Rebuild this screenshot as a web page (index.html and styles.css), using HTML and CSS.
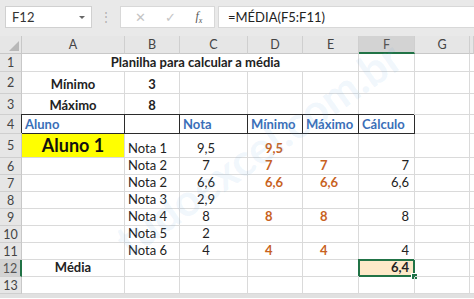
FILE: index.html
```html
<!DOCTYPE html>
<html lang="pt">
<head>
  <meta charset="UTF-8">
  <title>Planilha para calcular a média</title>
  <link rel="stylesheet" href="styles.css">
</head>
<body>

  <div class="toolbar">
    <div class="namebox">F12 <span class="arrow"></span></div>
    <div class="dots">⋮</div>
    <div class="buttons">
      <span class="btn">✕</span>
      <span class="btn">✓</span>
      <span class="btn fx">f<sub>x</sub></span>
    </div>
    <div class="formula">=MÉDIA(F5:F11)</div>
  </div>

  <div class="sheet">
    <!-- cabeçalho das colunas -->
    <div class="corner"></div>
    <div class="colhead">A</div>
    <div class="colhead">B</div>
    <div class="colhead">C</div>
    <div class="colhead">D</div>
    <div class="colhead">E</div>
    <div class="colhead active">F</div>
    <div class="colhead">G</div>
    <div class="colhead"></div>

    <!-- linha 1 -->
    <div class="rowhead">1</div>
    <div class="cell title">Planilha para calcular a média</div>
    <div class="cell"></div>
    <div class="cell"></div>
    <div class="cell"></div>

    <!-- linha 2 -->
    <div class="rowhead">2</div>
    <div class="cell bold center">Mínimo</div>
    <div class="cell bold center">3</div>
    <div class="cell"></div>
    <div class="cell"></div>
    <div class="cell"></div>
    <div class="cell"></div>
    <div class="cell"></div>
    <div class="cell"></div>

    <!-- linha 3 -->
    <div class="rowhead">3</div>
    <div class="cell bold center">Máximo</div>
    <div class="cell bold center">8</div>
    <div class="cell"></div>
    <div class="cell"></div>
    <div class="cell"></div>
    <div class="cell"></div>
    <div class="cell"></div>
    <div class="cell"></div>

    <!-- linha 4 -->
    <div class="rowhead">4</div>
    <div class="cell hdr">Aluno</div>
    <div class="cell hdr"></div>
    <div class="cell hdr">Nota</div>
    <div class="cell hdr">Mínimo</div>
    <div class="cell hdr">Máximo</div>
    <div class="cell hdr">Cálculo</div>
    <div class="cell"></div>
    <div class="cell"></div>

    <!-- linha 5 -->
    <div class="rowhead">5</div>
    <div class="cell student">Aluno 1</div>
    <div class="cell">Nota 1</div>
    <div class="cell note">9,5</div>
    <div class="cell orange">9,5</div>
    <div class="cell orange"></div>
    <div class="cell num"></div>
    <div class="cell"></div>
    <div class="cell"></div>

    <!-- linha 6 -->
    <div class="rowhead">6</div>
    <div class="cell"></div>
    <div class="cell">Nota 2</div>
    <div class="cell note">7</div>
    <div class="cell orange">7</div>
    <div class="cell orange">7</div>
    <div class="cell num">7</div>
    <div class="cell"></div>
    <div class="cell"></div>

    <!-- linha 7 -->
    <div class="rowhead">7</div>
    <div class="cell"></div>
    <div class="cell">Nota 2</div>
    <div class="cell note">6,6</div>
    <div class="cell orange">6,6</div>
    <div class="cell orange">6,6</div>
    <div class="cell num">6,6</div>
    <div class="cell"></div>
    <div class="cell"></div>

    <!-- linha 8 -->
    <div class="rowhead">8</div>
    <div class="cell"></div>
    <div class="cell">Nota 3</div>
    <div class="cell note">2,9</div>
    <div class="cell orange"></div>
    <div class="cell orange"></div>
    <div class="cell num"></div>
    <div class="cell"></div>
    <div class="cell"></div>

    <!-- linha 9 -->
    <div class="rowhead">9</div>
    <div class="cell"></div>
    <div class="cell">Nota 4</div>
    <div class="cell note">8</div>
    <div class="cell orange">8</div>
    <div class="cell orange">8</div>
    <div class="cell num">8</div>
    <div class="cell"></div>
    <div class="cell"></div>

    <!-- linha 10 -->
    <div class="rowhead">10</div>
    <div class="cell"></div>
    <div class="cell">Nota 5</div>
    <div class="cell note">2</div>
    <div class="cell orange"></div>
    <div class="cell orange"></div>
    <div class="cell num"></div>
    <div class="cell"></div>
    <div class="cell"></div>

    <!-- linha 11 -->
    <div class="rowhead">11</div>
    <div class="cell"></div>
    <div class="cell">Nota 6</div>
    <div class="cell note">4</div>
    <div class="cell orange">4</div>
    <div class="cell orange">4</div>
    <div class="cell num">4</div>
    <div class="cell"></div>
    <div class="cell"></div>

    <!-- linha 12 -->
    <div class="rowhead active">12</div>
    <div class="cell bold center">Média</div>
    <div class="cell"></div>
    <div class="cell"></div>
    <div class="cell"></div>
    <div class="cell"></div>
    <div class="cell num result">6,4<span class="handle"></span></div>
    <div class="cell"></div>
    <div class="cell"></div>

    <!-- linha 13 -->
    <div class="rowhead">13</div>
    <div class="cell"></div>
    <div class="cell"></div>
    <div class="cell"></div>
    <div class="cell"></div>
    <div class="cell"></div>
    <div class="cell"></div>
    <div class="cell"></div>
    <div class="cell"></div>
  </div>

  <div class="scrollbar"></div>

  <div class="watermark">tudoexcel.com.br</div>

</body>
</html>
```

FILE: styles.css
```css
body {
  margin: 0;
  width: 474px;
  height: 299px;
  overflow: hidden;
  position: relative;
  background: #fff;
  font-family: Lato, "Liberation Sans", sans-serif;
  font-size: 13px;
  color: #222;
}

/* barra de fórmulas */
.toolbar {
  height: 36px;
  background: #e9e9e9;
  display: flex;
  align-items: flex-start;
  padding: 6px 0 0 5px;
  box-sizing: border-box;
}

.namebox {
  width: 87px;
  height: 22px;
  background: #fff;
  border: 1px solid #d0d0d0;
  box-sizing: border-box;
  display: flex;
  align-items: center;
  justify-content: space-between;
  padding: 0 6px 0 6px;
  color: #333;
}

.arrow {
  width: 0;
  height: 0;
  border-left: 3px solid transparent;
  border-right: 3px solid transparent;
  border-top: 3px solid #666;
}

.dots {
  width: 28px;
  text-align: center;
  color: #b0b0b0;
  line-height: 22px;
  font-size: 12px;
}

.buttons {
  width: 95px;
  height: 22px;
  background: #fff;
  border: 1px solid #d8d8d8;
  box-sizing: border-box;
  display: flex;
  align-items: center;
  justify-content: space-around;
  padding: 0 2px 0 4px;
}

.btn {
  color: #c4c4c4;
  font-size: 13px;
}

.fx {
  color: #555;
  font-family: "Liberation Serif", serif;
  font-style: italic;
  font-size: 12px;
}

.fx sub {
  font-size: 8px;
}

.formula {
  flex: 1;
  height: 22px;
  margin-left: 3px;
  background: #fff;
  border: 1px solid #d8d8d8;
  border-right: none;
  box-sizing: border-box;
  padding-left: 9px;
  line-height: 20px;
  color: #222;
}

/* planilha */
.sheet {
  display: grid;
  grid-template-columns: 22px 103px 55px 68px 55px 56px 56px 55px 4px;
  grid-template-rows: 18px 18px 22px 21px 19px 24px repeat(8, 17px);
}

.corner {
  background: #e6e6e6;
  border-right: 1px solid #c8c8c8;
  border-bottom: 1px solid #c8c8c8;
  position: relative;
}

.corner::after {
  content: "";
  position: absolute;
  right: 2px;
  bottom: 2px;
  border-left: 10px solid transparent;
  border-bottom: 10px solid #b8b8b8;
}

.colhead {
  background: #e6e6e6;
  border-right: 1px solid #cfcfcf;
  border-bottom: 1px solid #c8c8c8;
  display: flex;
  align-items: center;
  justify-content: center;
  color: #444;
  font-size: 12.5px;
}

.colhead.active {
  background: #d3d3d3;
  border-bottom: 2px solid #217346;
  color: #555;
}

.rowhead {
  background: #e6e6e6;
  border-right: 1px solid #c8c8c8;
  border-bottom: 1px solid #cfcfcf;
  display: flex;
  align-items: center;
  justify-content: center;
  color: #444;
  font-size: 12.5px;
}

.rowhead.active {
  background: #d3d3d3;
  border-right: 2px solid #217346;
  color: #555;
}

.cell {
  border-right: 1px solid #dadada;
  border-bottom: 1px solid #dadada;
  padding: 0 3px;
  display: flex;
  align-items: flex-end;
  padding-bottom: 1px;
  white-space: nowrap;
  position: relative;
}

.title {
  grid-column: span 5;
  justify-content: center;
  font-weight: bold;
  padding-left: 14px;
}

.bold {
  font-weight: bold;
}

.center {
  justify-content: center;
}

.hdr {
  border-right-color: #2b2b2b;
  border-bottom-color: #2b2b2b;
  box-shadow: -1px -1px 0 #2b2b2b;
  color: #3a6fb8;
  font-weight: bold;
}

.student {
  background: #ffff00;
  justify-content: center;
  align-items: center;
  font-weight: bold;
  font-size: 18px;
  color: #111;
  padding-bottom: 2px;
}

.note {
  justify-content: center;
  padding-right: 18px;
}

.orange {
  color: #c8621e;
  font-weight: bold;
  padding-left: 17px;
}

.num {
  justify-content: flex-end;
  padding-right: 5px;
}

.result {
  background: #fde9c8;
  font-weight: bold;
  box-shadow: inset 0 0 0 1px #217346, -1px -1px 0 #217346;
  border-right-color: #217346;
  border-bottom-color: #217346;
}

.handle {
  position: absolute;
  right: -4px;
  bottom: -4px;
  width: 5px;
  height: 5px;
  background: #217346;
  border: 1px solid #fff;
}

.scrollbar {
  height: 4px;
  background: #e1e1e1;
}

/* marca d'água */
.watermark {
  position: absolute;
  left: 78px;
  top: 122px;
  width: 360px;
  text-align: center;
  transform: rotate(-35deg);
  font-size: 44px;
  font-weight: bold;
  color: rgba(110, 170, 225, 0.1);
  pointer-events: none;
}
```
